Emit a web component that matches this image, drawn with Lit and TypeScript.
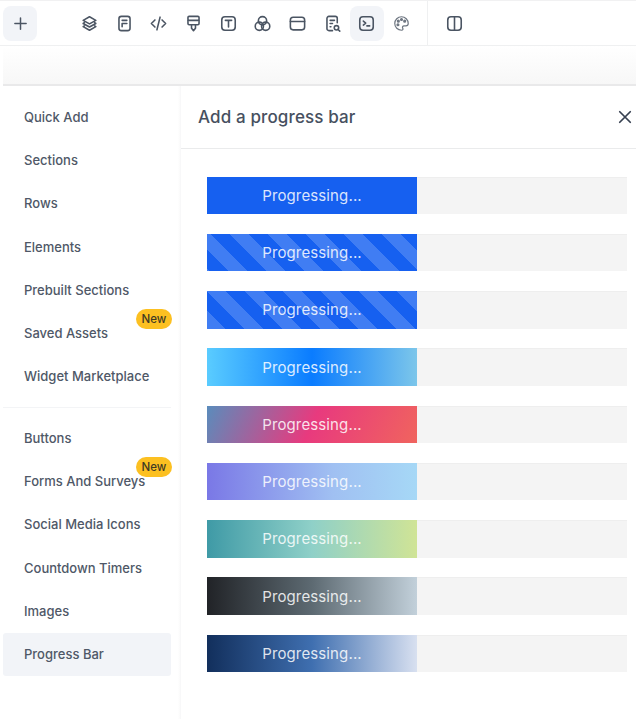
import { LitElement, html, css, svg } from "lit";
import { customElement } from "lit/decorators.js";

const icons = [
  svg`<path d="M12 3.500 20 8l-8 4.500L4 8z"/><path d="M5.500 11 4 12l8 4.500 8-4.500-1.500-1"/><path d="M5.500 15 4 16l8 4.500 8-4.500-1.500-1"/>`,
  svg`<rect x="5" y="3" width="14" height="18" rx="3"/><path d="M9 8h6M9 12h6M9 12v4"/>`,
  svg`<path d="M7.500 7.500 3 12l4.500 4.500M16.500 7.500 21 12l-4.500 4.500M14 4l-4 16"/>`,
  svg`<rect x="5" y="3" width="14" height="5" rx="1.500"/><path d="M5 8v4a1.500 1.500 0 0 0 1.500 1.500h11A1.500 1.500 0 0 0 19 12V8M9.500 13.500V18l2.500 3 2.500-3v-4.500"/>`,
  svg`<rect x="3.500" y="3.500" width="17" height="17" rx="4"/><path d="M8 8h8M12 8v8.500"/>`,
  svg`<circle cx="12" cy="8.500" r="5.200"/><circle cx="8" cy="15.500" r="5.200"/><circle cx="16" cy="15.500" r="5.200"/>`,
  svg`<rect x="3" y="4" width="18" height="16" rx="3.500"/><path d="M3 9.500h18"/>`,
  svg`<path d="M12 21H7.500A2.500 2.500 0 0 1 5 18.500v-13A2.500 2.500 0 0 1 7.500 3h8A2.500 2.500 0 0 1 18 5.500V11M9 8h5.500M9 12h3M9 16h1"/><circle cx="17" cy="17.500" r="2.800"/><path d="m19 19.500 2.200 2.200"/>`,
  svg`<rect x="3.500" y="3.500" width="17" height="17" rx="4"/><path d="m8 9 3 2.500L8 14M12.500 15H16"/>`,
  svg`<g stroke-width="1.500" opacity=".8"><path d="M12 3.500a8.500 8.500 0 1 0 0 17c2 0 2.200-1.500 1.500-2.700-.8-1.300.1-2.800 1.600-2.800h2.400c1.800 0 3-1.100 3-3 0-4.800-3.800-8.500-8.500-8.500z"/><circle cx="8" cy="9" r="1.200" fill="currentColor"/><circle cx="12" cy="7" r="1.200" fill="currentColor"/><circle cx="16" cy="9" r="1.200" fill="currentColor"/><circle cx="7.500" cy="13.500" r="1.200" fill="currentColor"/></g>`,
];

const group1 = ["Quick Add", "Sections", "Rows", "Elements", "Prebuilt Sections", "Saved Assets", "Widget Marketplace"];
const group2 = ["Buttons", "Forms And Surveys", "Social Media Icons", "Countdown Timers", "Images", "Progress Bar"];
const withBadge = new Set(["Saved Assets", "Forms And Surveys"]);
const fills = ["solid", "stripe a", "stripe b", "g1", "g2", "g3", "g4", "g5", "g6"];

@customElement("app-root")
export class AppRoot extends LitElement {
  static styles = css`
    :host {
      display: flex;
      flex-direction: column;
      width: 636px;
      height: 719px;
      overflow: hidden;
      background: #fff;
      font-family: Inter, "Liberation Sans", sans-serif;
      color: #4b5563;
    }
    .toolbar {
      height: 46px;
      box-sizing: border-box;
      flex: none;
      display: flex;
      align-items: center;
      padding-left: 3px;
      border-top: 1px solid #f1f1f2;
      border-bottom: 1px solid #eff0f1;
    }
    .btn {
      flex: none;
      width: 34.700px;
      height: 35px;
      border-radius: 8px;
      display: flex;
      align-items: center;
      justify-content: center;
      color: #4b5563;
    }
    .btn svg {
      width: 19px;
      height: 19px;
      fill: none;
      stroke: currentColor;
      stroke-width: 2;
      stroke-linecap: round;
      stroke-linejoin: round;
    }
    .btn.on {
      background: #f2f4f8;
    }
    .plus {
      width: 34px;
      margin-right: 35px;
    }
    .plus svg {
      width: 15px;
      height: 15px;
      stroke-width: 2.400;
    }
    .sep {
      align-self: stretch;
      width: 1px;
      background: #eff0f1;
      margin: 0 9px 0 8px;
    }
    .canvas {
      flex: none;
      height: 40px;
      margin-left: 3px;
      background: linear-gradient(#fff, #f7f7f7);
      border-bottom: 2px solid #e9e9ea;
      box-sizing: border-box;
    }
    .main {
      flex: 1;
      display: flex;
      min-height: 0;
    }
    .side {
      flex: none;
      width: 181px;
      box-sizing: border-box;
      padding: 9px 9px 0 3px;
      border-right: 1px solid #f8f8f9;
      background: linear-gradient(90deg, #fff 178px, #fafafa);
    }
    .item {
      position: relative;
      height: 43.300px;
      padding-left: 21px;
      display: flex;
      align-items: center;
      border-radius: 3px;
      font-size: 13px;
      font-weight: 500;
      color: #4f5867;
      white-space: nowrap;
    }
    .item.on {
      background: #f2f4f8;
    }
    .badge {
      position: absolute;
      right: -1px;
      top: -2px;
      width: 36px;
      height: 20px;
      border-radius: 10px;
      background: #fcc021;
      color: #3f3a24;
      font-size: 11.500px;
      font-weight: 500;
      display: flex;
      align-items: center;
      justify-content: center;
    }
    .rule {
      height: 1px;
      margin: 8.500px 0 8.500px;
      background: #f3f4f6;
    }
    .panel {
      flex: 1;
      min-width: 0;
      display: flex;
      flex-direction: column;
    }
    .head {
      flex: none;
      height: 63px;
      box-sizing: border-box;
      display: flex;
      align-items: center;
      justify-content: space-between;
      padding: 0 4px 0 17px;
      border-bottom: 1px solid #eaebec;
    }
    h1 {
      margin: 0;
      font-size: 17px;
      font-weight: 500;
      color: #475060;
      letter-spacing: 0.130px;
    }
    .close {
      width: 14px;
      height: 14px;
      fill: none;
      stroke: #374151;
      stroke-width: 2;
      stroke-linecap: round;
    }
    .bars {
      display: flex;
      flex-direction: column;
      gap: 19.750px;
      padding: 27.500px 9px 0 26px;
    }
    .track {
      height: 37.500px;
      background: #f4f4f4;
      border-top: 1px solid #eeeeee;
      box-sizing: border-box;
    }
    .fill {
      width: 50%;
      height: 37.500px;
      margin-top: -1px;
      box-sizing: border-box;
      display: flex;
      align-items: center;
      justify-content: center;
      font-size: 15px;
      color: rgba(255, 255, 255, 0.85);
      letter-spacing: 0.130px;
    }
    .solid {
      background: #1660f0;
    }
    .stripe {
      background-color: #1660f0;
      background-image: linear-gradient(
        45deg,
        rgba(255, 255, 255, 0.18) 25%,
        transparent 25%,
        transparent 50%,
        rgba(255, 255, 255, 0.18) 50%,
        rgba(255, 255, 255, 0.18) 75%,
        transparent 75%
      );
      background-size: 38px 38px;
    }
    .a {
      background-position: 23px 0;
    }
    .b {
      background-position: 0 0;
    }
    .g1 {
      background: linear-gradient(90deg, #5accff, #0a7cff 50%, #7cc6ea);
    }
    .g2 {
      background: linear-gradient(115deg, #5a8cbc, #e83a7e 50%, #f0645e);
    }
    .g3 {
      background: linear-gradient(90deg, #7a78e6, #a0c0f2 60%, #a6d8f6);
    }
    .g4 {
      background: linear-gradient(90deg, #3f9aa6, #8fd0c8 50%, #d0e496);
    }
    .g5 {
      background: linear-gradient(90deg, #212327, #5d6a72 50%, #c2d0da);
    }
    .g6 {
      background: linear-gradient(90deg, #122f5c, #3f6fb0 50%, #d8e0f0);
    }
  `;

  private item(label: string) {
    return html`<div class="item ${label === "Progress Bar" ? "on" : ""}">
      ${label}${withBadge.has(label) ? html`<span class="badge">New</span>` : ""}
    </div>`;
  }

  render() {
    return html`
      <div class="toolbar">
        <div class="btn on plus">
          <svg viewBox="0 0 24 24"><path d="M12 3v18M3 12h18" /></svg>
        </div>
        ${icons.map(
          (p, i) => html`<div class="btn ${i === 8 ? "on" : ""}"><svg viewBox="0 0 24 24">${p}</svg></div>`
        )}
        <div class="sep"></div>
        <div class="btn">
          <svg viewBox="0 0 24 24"><rect x="3.500" y="3.500" width="17" height="17" rx="4" /><path d="M12 3.500v17" /></svg>
        </div>
      </div>
      <div class="canvas"></div>
      <div class="main">
        <nav class="side">
          ${group1.map((l) => this.item(l))}
          <div class="rule"></div>
          ${group2.map((l) => this.item(l))}
        </nav>
        <section class="panel">
          <header class="head">
            <h1>Add a progress bar</h1>
            <svg class="close" viewBox="0 0 16 16"><path d="M2 2l12 12M14 2 2 14" /></svg>
          </header>
          <div class="bars">
            ${fills.map(
              (f) => html`<div class="track"><div class="fill ${f}">Progressing...</div></div>`
            )}
          </div>
        </section>
      </div>
    `;
  }
}
